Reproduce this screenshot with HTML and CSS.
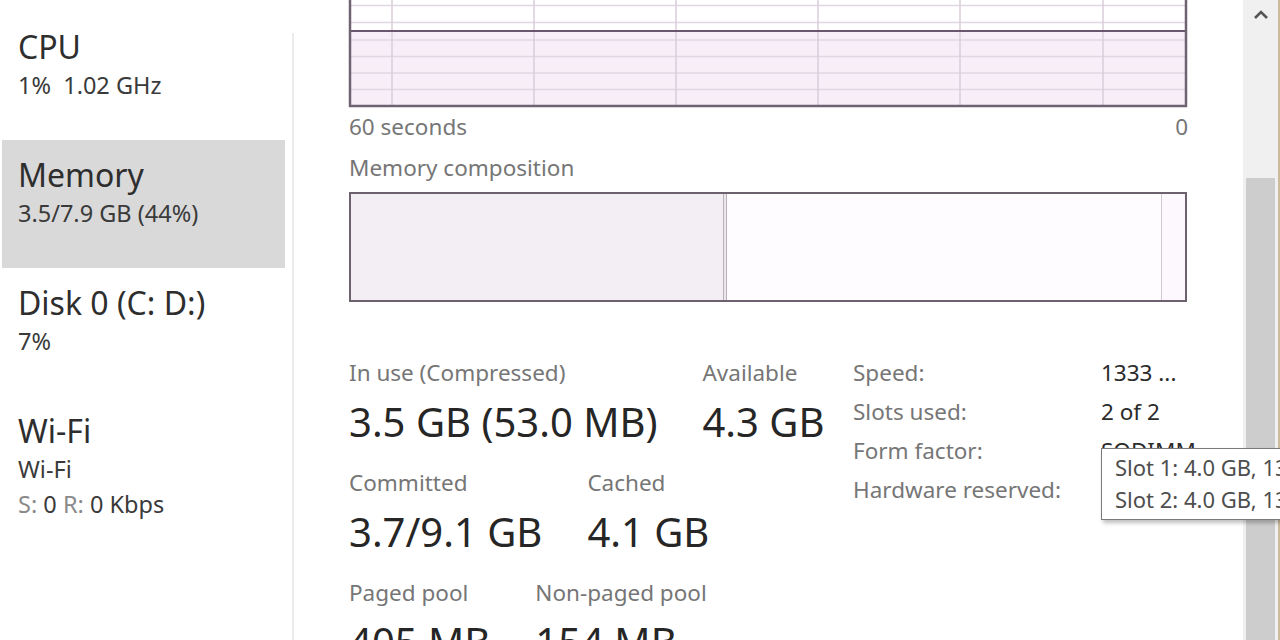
FILE: index.html
```html
<!DOCTYPE html>
<html lang="en">
<head>
<meta charset="utf-8">
<title>Task Manager - Memory</title>
<link rel="stylesheet" href="styles.css">
</head>
<body>
<div class="window">
  <nav class="sidebar">
    <div class="item">
      <div class="item-title">CPU</div>
      <div class="item-sub">1%&nbsp; 1.02 GHz</div>
    </div>
    <div class="item selected">
      <div class="item-title">Memory</div>
      <div class="item-sub">3.5/7.9 GB (44%)</div>
    </div>
    <div class="item">
      <div class="item-title">Disk 0 (C: D:)</div>
      <div class="item-sub">7%</div>
    </div>
    <div class="item">
      <div class="item-title">Wi-Fi</div>
      <div class="item-sub">Wi-Fi</div>
      <div class="item-sub tight"><span class="dim">S:</span> 0 <span class="dim">R:</span> 0 Kbps</div>
    </div>
  </nav>
  <div class="divider"></div>
  <main class="main">
    <svg class="graph" width="840" height="108" viewBox="0 0 840 108">
      <rect x="2" y="31" width="836" height="75" fill="#f7eef7"/>
      <g stroke="#e2d6e2" stroke-width="1.5">
        <line x1="2" y1="5.5" x2="838" y2="5.5"/>
        <line x1="2" y1="22.5" x2="838" y2="22.5"/>
        <line x1="2" y1="40" x2="838" y2="40"/>
        <line x1="2" y1="56.5" x2="838" y2="56.5"/>
        <line x1="2" y1="73" x2="838" y2="73"/>
        <line x1="2" y1="89.5" x2="838" y2="89.5"/>
      </g>
      <g stroke="#d9ccd9" stroke-width="1.5">
        <line x1="44" y1="0" x2="44" y2="106"/>
        <line x1="186" y1="0" x2="186" y2="106"/>
        <line x1="328" y1="0" x2="328" y2="106"/>
        <line x1="470" y1="0" x2="470" y2="106"/>
        <line x1="612" y1="0" x2="612" y2="106"/>
        <line x1="755" y1="0" x2="755" y2="106"/>
      </g>
      <line x1="2" y1="31" x2="838" y2="31" stroke="#6a566e" stroke-width="2"/>
      <polyline points="2,0 2,106 838,106 838,0" fill="none" stroke="#6f6272" stroke-width="2.5"/>
    </svg>
    <div class="axis">
      <span>60 seconds</span>
      <span>0</span>
    </div>
    <div class="section-label">Memory composition</div>
    <div class="composition">
      <div class="seg-inuse"></div>
      <div class="seg-sep"></div>
      <div class="seg-standby"></div>
      <div class="seg-free"></div>
    </div>
    <div class="stats">
      <div class="stats-left">
        <div class="stat-row">
          <div class="stat">
            <div class="stat-label">In use (Compressed)</div>
            <div class="stat-value">3.5 GB (53.0 MB)</div>
          </div>
          <div class="stat">
            <div class="stat-label">Available</div>
            <div class="stat-value">4.3 GB</div>
          </div>
        </div>
        <div class="stat-row">
          <div class="stat">
            <div class="stat-label">Committed</div>
            <div class="stat-value">3.7/9.1 GB</div>
          </div>
          <div class="stat">
            <div class="stat-label">Cached</div>
            <div class="stat-value">4.1 GB</div>
          </div>
        </div>
        <div class="stat-row">
          <div class="stat">
            <div class="stat-label">Paged pool</div>
            <div class="stat-value">405 MB</div>
          </div>
          <div class="stat">
            <div class="stat-label">Non-paged pool</div>
            <div class="stat-value">154 MB</div>
          </div>
        </div>
      </div>
      <dl class="props">
        <dt>Speed:</dt><dd>1333 ...</dd>
        <dt>Slots used:</dt><dd>2 of 2</dd>
        <dt>Form factor:</dt><dd>SODIMM</dd>
        <dt>Hardware reserved:</dt><dd>&nbsp;</dd>
      </dl>
    </div>
  </main>
  <div class="scrollbar">
    <div class="scroll-up">
      <svg width="16" height="12" viewBox="0 0 16 12"><polyline points="2,9 8,3 14,9" fill="none" stroke="#555" stroke-width="2.6"/></svg>
    </div>
    <div class="scroll-thumb"></div>
  </div>
</div>
<div class="tooltip">
  <div>Slot 1: 4.0 GB, 1333 MHz</div>
  <div>Slot 2: 4.0 GB, 1333 MHz</div>
</div>
</body>
</html>
```
FILE: styles.css
```css
html, body {
  margin: 0;
  padding: 0;
  background: #ffffff;
}
body {
  width: 1280px;
  height: 640px;
  overflow: hidden;
  position: relative;
  font-family: "Noto Sans", "Open Sans", "DejaVu Sans", sans-serif;
  color: #2b2b2b;
}
.window {
  display: flex;
  height: 640px;
}
.sidebar {
  width: 283px;
  padding: 12px 0 0 2px;
  flex: none;
}
.item {
  height: 128px;
  box-sizing: border-box;
  padding: 16px 0 0 16px;
}
.item.selected {
  background: #d9d9d9;
}
.item-title {
  font-size: 32px;
  line-height: 38px;
  color: #2e2e2e;
}
.item-sub {
  font-size: 23.5px;
  line-height: 38px;
  color: #3a3a3a;
}
.item-sub.tight {
  line-height: 32px;
}
.dim {
  color: #8a8a8a;
}
.divider {
  width: 2px;
  margin: 33px 0 0 7px;
  background: #ebebeb;
  flex: none;
}
.main {
  margin-left: 55px;
  width: 840px;
  flex: none;
}
.graph {
  display: block;
  margin-left: -1px;
}
.axis {
  display: flex;
  justify-content: space-between;
  width: 839px;
  font-size: 22.5px;
  line-height: 28px;
  color: #767676;
  margin-top: 5px;
}
.section-label {
  font-size: 22.5px;
  line-height: 28px;
  color: #767676;
  margin-top: 13px;
}
.composition {
  display: flex;
  width: 834px;
  height: 106px;
  margin-top: 10px;
  border: 2px solid #6d6170;
}
.seg-inuse {
  width: 372px;
  background: #f3eef3;
}
.seg-sep {
  width: 2px;
  border-left: 1.5px solid #b9b2ba;
  border-right: 1.5px solid #b9b2ba;
  background: #ece6ec;
}
.seg-standby {
  flex: 1;
  background: #fefcfe;
  border-right: 1.5px solid #cfcacf;
}
.seg-free {
  width: 23px;
  background: #fdf8fd;
}
.stats {
  display: flex;
  margin-top: 57px;
}
.stats-left {
  width: 504px;
  flex: none;
  display: flex;
  flex-direction: column;
  gap: 22px;
}
.stat-row {
  display: flex;
  gap: 45px;
}
.stat-label {
  font-size: 22.5px;
  line-height: 28px;
  color: #767676;
  margin-bottom: 10px;
  white-space: nowrap;
}
.stat-value {
  font-size: 40px;
  line-height: 50px;
  color: #262626;
  white-space: nowrap;
}
.props {
  display: grid;
  grid-template-columns: 248px auto;
  grid-auto-rows: 39px;
  align-items: center;
  margin: -6px 0 0 0;
  font-size: 22.5px;
  white-space: nowrap;
}
.props dt {
  color: #767676;
}
.props dd {
  margin: 0;
  color: #2b2b2b;
}
.scrollbar {
  margin-left: 54px;
  width: 35px;
  background: #f0f0f0;
  border-right: 2px solid #cbbd9c;
  display: flex;
  flex-direction: column;
  flex: none;
}
.scroll-up {
  height: 178px;
  display: flex;
  justify-content: center;
  padding-top: 9px;
  box-sizing: border-box;
}
.scroll-thumb {
  flex: 1;
  margin: 0 3px;
  background: #cdcdcd;
}
.tooltip {
  position: absolute;
  left: 1101px;
  top: 448px;
  width: 230px;
  padding: 2px 0 4px 13px;
  background: #ffffff;
  border: 1.5px solid #7a7a7a;
  box-shadow: 2px 3px 4px rgba(0,0,0,0.25);
  font-size: 22px;
  line-height: 32px;
  color: #4e4e4e;
  white-space: nowrap;
}
```
